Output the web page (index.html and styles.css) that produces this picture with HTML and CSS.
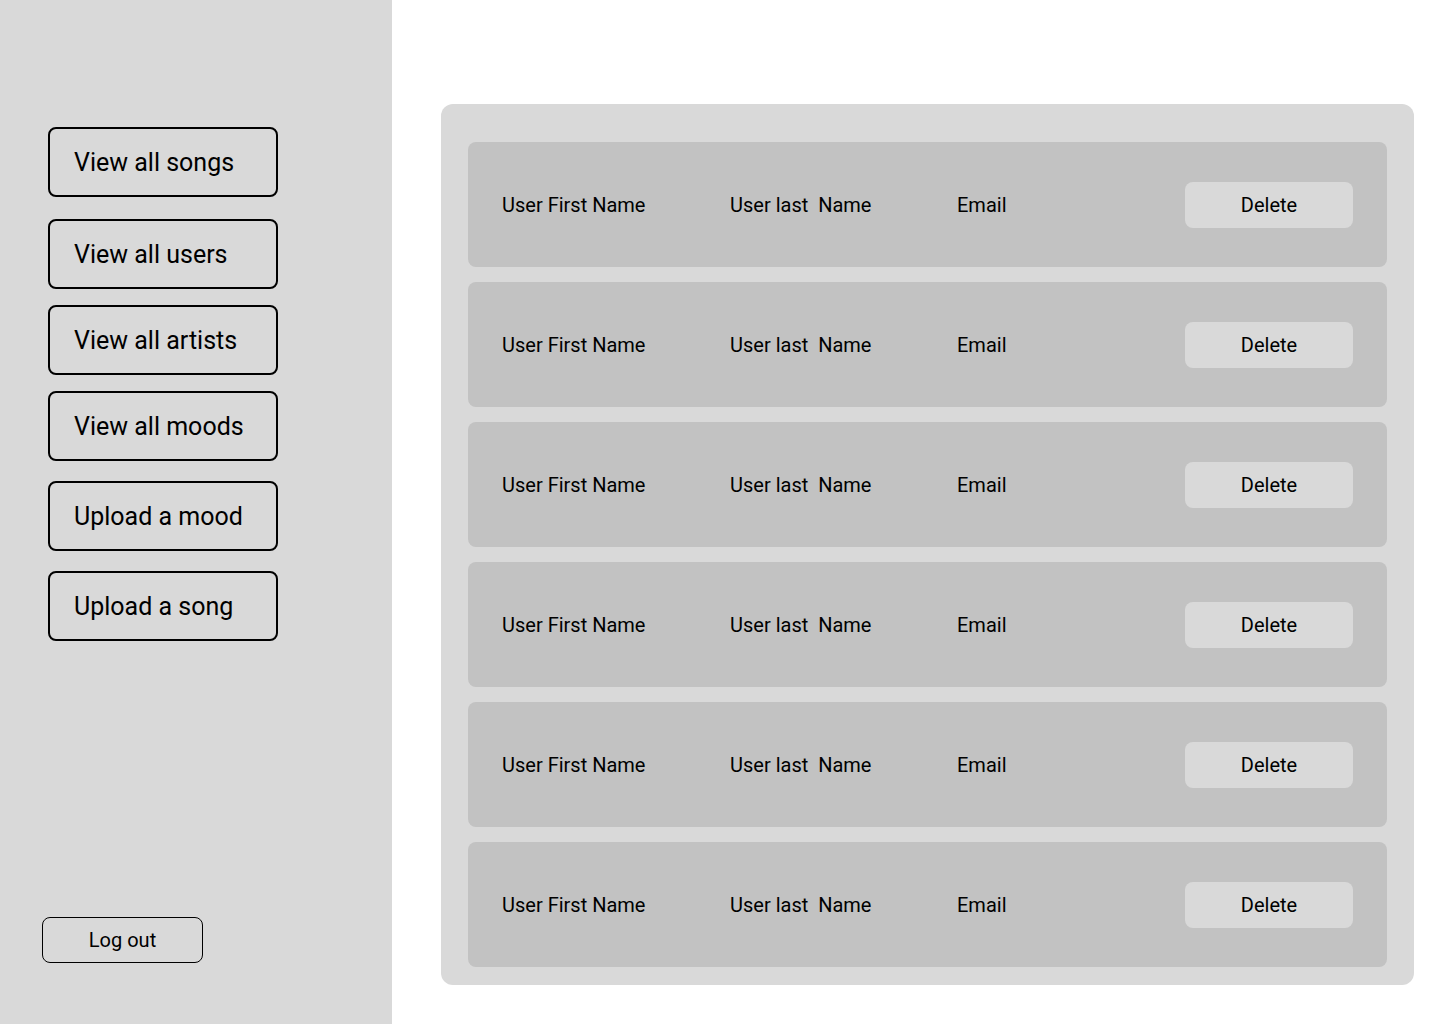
FILE: index.html
```html
<!DOCTYPE html>
<html lang="en">
<head>
<meta charset="utf-8">
<title>Admin - Users</title>
<link rel="stylesheet" href="styles.css">
</head>
<body>
<aside class="sidebar">
  <nav class="nav">
    <button class="nav-btn nav-btn--first">View all songs</button>
    <button class="nav-btn nav-btn--g22">View all users</button>
    <button class="nav-btn nav-btn--g16">View all artists</button>
    <button class="nav-btn nav-btn--g16">View all moods</button>
    <button class="nav-btn nav-btn--g20">Upload a mood</button>
    <button class="nav-btn nav-btn--g20">Upload a song</button>
  </nav>
  <button class="logout">Log out</button>
</aside>
<main class="main">
  <section class="panel">
    <div class="row"><span class="cell cell--first">User First Name</span><span class="cell cell--last">User last&nbsp; Name</span><span class="cell cell--email">Email</span><button class="delete">Delete</button></div>
    <div class="row"><span class="cell cell--first">User First Name</span><span class="cell cell--last">User last&nbsp; Name</span><span class="cell cell--email">Email</span><button class="delete">Delete</button></div>
    <div class="row"><span class="cell cell--first">User First Name</span><span class="cell cell--last">User last&nbsp; Name</span><span class="cell cell--email">Email</span><button class="delete">Delete</button></div>
    <div class="row"><span class="cell cell--first">User First Name</span><span class="cell cell--last">User last&nbsp; Name</span><span class="cell cell--email">Email</span><button class="delete">Delete</button></div>
    <div class="row"><span class="cell cell--first">User First Name</span><span class="cell cell--last">User last&nbsp; Name</span><span class="cell cell--email">Email</span><button class="delete">Delete</button></div>
    <div class="row"><span class="cell cell--first">User First Name</span><span class="cell cell--last">User last&nbsp; Name</span><span class="cell cell--email">Email</span><button class="delete">Delete</button></div>
  </section>
</main>
</body>
</html>
```
FILE: styles.css
```css
* { box-sizing: border-box; }
html, body { margin: 0; padding: 0; }
body {
  width: 1440px;
  height: 1024px;
  display: flex;
  background: #ffffff;
  font-family: Roboto, "Liberation Sans", sans-serif;
  color: #000;
  overflow: hidden;
}
button {
  font-family: inherit;
  color: #000;
  cursor: pointer;
}
.sidebar {
  width: 392px;
  height: 1024px;
  background: #d9d9d9;
  display: flex;
  flex-direction: column;
  padding: 127px 0 61px 0;
}
.nav {
  display: flex;
  flex-direction: column;
  padding-left: 48px;
}
.nav-btn {
  width: 230px;
  height: 70px;
  border: 2px solid #000;
  border-radius: 8px;
  background: transparent;
  font-size: 25px;
  text-align: left;
  padding: 0 0 0 24px;
  line-height: 1;
}
.nav-btn--g22 { margin-top: 22px; }
.nav-btn--g16 { margin-top: 16px; }
.nav-btn--g20 { margin-top: 20px; }
.logout {
  margin-top: auto;
  margin-left: 42px;
  width: 161px;
  height: 46px;
  border: 1px solid #000;
  border-radius: 8px;
  background: transparent;
  font-size: 20px;
  padding: 0;
}
.main {
  flex: 1;
  padding: 104px 0 0 49px;
}
.panel {
  width: 973px;
  height: 881px;
  background: #d9d9d9;
  border-radius: 12px;
  padding: 38px 27px 18px 27px;
  display: flex;
  flex-direction: column;
  gap: 15px;
}
.row {
  height: 125px;
  background: #c2c2c2;
  border-radius: 8px;
  display: flex;
  align-items: center;
  padding: 0 34px;
  font-size: 20px;
}
.cell { white-space: pre; }
.cell--first { width: 228px; }
.cell--last { width: 227px; }
.cell--email { flex: 1; }
.delete {
  width: 168px;
  height: 46px;
  border: none;
  border-radius: 8px;
  background: #d9d9d9;
  font-size: 20px;
  padding: 0;
}
```
